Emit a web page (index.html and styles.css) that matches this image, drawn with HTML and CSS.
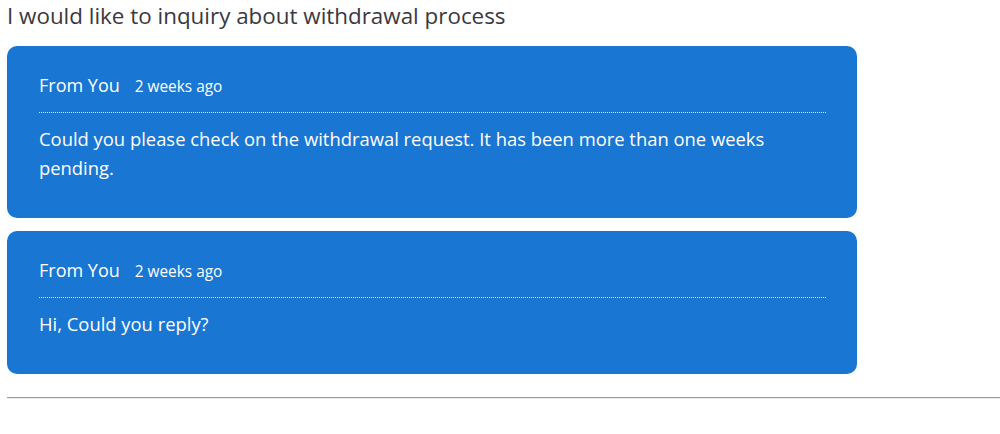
FILE: index.html
```html
<!DOCTYPE html>
<html lang="en">
<head>
<meta charset="utf-8">
<title>Ticket</title>
<link rel="stylesheet" href="styles.css">
</head>
<body>
<div class="page">
  <h1 class="title">I would like to inquiry about withdrawal process</h1>
  <div class="thread">
    <div class="msg">
      <div class="msg-head"><span class="from">From You</span><span class="when">2 weeks ago</span></div>
      <div class="msg-body">Could you please check on the withdrawal request. It has been more than one weeks pending.</div>
    </div>
    <div class="msg">
      <div class="msg-head"><span class="from">From You</span><span class="when">2 weeks ago</span></div>
      <div class="msg-body">Hi, Could you reply?</div>
    </div>
  </div>
  <div class="rule"></div>
</div>
</body>
</html>
```
FILE: styles.css
```css
html, body {
  margin: 0;
  padding: 0;
  background: #fff;
}
body {
  font-family: "Open Sans", "Noto Sans", sans-serif;
}
.page {
  padding: 0 0 0 7px;
}
.title {
  margin: 0 0 15px 0;
  font-weight: 400;
  font-size: 22.4px;
  line-height: 31px;
  color: #3b383f;
}
.thread {
  display: flex;
  flex-direction: column;
  gap: 13px;
  width: 850px;
}
.msg {
  background: #1976d2;
  border-radius: 10px;
  padding: 27px 31px 36px 32px;
  color: #fff;
}
.msg-head {
  display: flex;
  align-items: baseline;
  gap: 15px;
  line-height: 24px;
  padding-bottom: 13px;
  border-bottom: 1px dotted rgba(255,255,255,0.85);
}
.from {
  font-size: 18px;
  font-weight: 500;
}
.when {
  font-size: 15.4px;
}
.msg-body {
  margin-top: 11px;
  font-size: 18.4px;
  line-height: 29px;
}
.rule {
  margin-top: 23px;
  height: 1px;
  background: #9a9a9a;
  border-bottom: 1px solid #eeeeee;
}
```
